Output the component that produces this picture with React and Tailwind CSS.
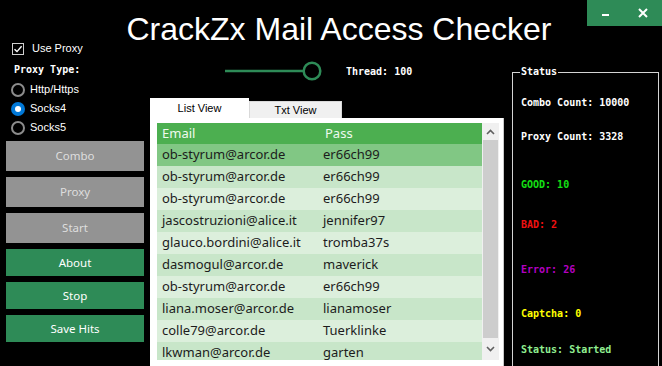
const ROWS = [
  ['ob-styrum@arcor.de', 'er66ch99'],
  ['ob-styrum@arcor.de', 'er66ch99'],
  ['ob-styrum@arcor.de', 'er66ch99'],
  ['jascostruzioni@alice.it', 'jennifer97'],
  ['glauco.bordini@alice.it', 'tromba37s'],
  ['dasmogul@arcor.de', 'maverick'],
  ['ob-styrum@arcor.de', 'er66ch99'],
  ['liana.moser@arcor.de', 'lianamoser'],
  ['colle79@arcor.de', 'Tuerklinke'],
  ['lkwman@arcor.de', 'garten'],
];

const mono = { fontFamily: '"DejaVu Sans Mono", "Liberation Mono", monospace' };

function Radio({ checked, label }) {
  return (
    <div className="flex h-[19px] items-center">
      {checked ? (
        <span className="ml-[11px] flex h-[14px] w-[14px] items-center justify-center rounded-full bg-[#0078d7]">
          <span className="h-[6px] w-[6px] rounded-full bg-white" />
        </span>
      ) : (
        <span className="ml-[11px] h-[14px] w-[14px] rounded-full border-2 border-[#8c8c8c]" />
      )}
      <span className="ml-[5px] text-[11px] text-white">{label}</span>
    </div>
  );
}

function SideButton({ label, green, h }) {
  return (
    <div
      className={`flex w-[138px] items-center justify-center text-[11.5px] ${h} ${
        green ? 'bg-[#2e8b57] text-white' : 'bg-[#939393] text-[#dedede]'
      }`}
      style={{ fontFamily: '"Noto Sans", sans-serif' }}
    >
      {label}
    </div>
  );
}

export default function App() {
  return (
    <div
      className="relative flex h-[366px] w-[662px] flex-col overflow-hidden bg-black"
      style={{ fontFamily: '"Liberation Sans", Arial, sans-serif' }}
    >
      {/* title bar */}
      <div className="relative h-[42px] shrink-0">
        <div className="pl-[16px] pt-[13px] text-center text-[32px] leading-[32px] text-white">
          CrackZx Mail Access Checker
        </div>
        <div className="absolute right-0 top-0 flex h-[26px] w-[75px] bg-[#2e8b57]">
          <div className="flex w-[37px] items-center justify-center">
            <span className="mt-[3px] h-[2px] w-[7px] bg-white" />
          </div>
          <div className="flex w-[38px] items-center justify-center">
            <svg width="10" height="10" viewBox="0 0 10 10">
              <path d="M1 1L9 9M9 1L1 9" stroke="white" strokeWidth="2" />
            </svg>
          </div>
        </div>
      </div>

      <div className="flex flex-1">
        {/* left column */}
        <div className="flex w-[150px] shrink-0 flex-col">
          <div className="flex h-[13px] items-center">
            <span className="ml-[12px] flex h-[12px] w-[12px] items-center justify-center border border-[#cfcfcf]">
              <svg width="10" height="10" viewBox="0 0 10 10">
                <path d="M1.5 5.2L4 7.6L8.6 2.2" fill="none" stroke="white" strokeWidth="1.4" />
              </svg>
            </span>
            <span className="ml-[8px] text-[11px] text-white">Use Proxy</span>
          </div>
          <div className="ml-[14px] mt-[8px] text-[10px] font-bold leading-[14px] text-white" style={mono}>
            Proxy Type:
          </div>
          <div className="mt-[3px] flex flex-col">
            <Radio label="Http/Https" />
            <Radio checked label="Socks4" />
            <Radio label="Socks5" />
          </div>
          <div className="ml-[6px] mt-[4px] flex flex-col gap-[6px]">
            <SideButton label="Combo" h="h-[30px]" />
            <SideButton label="Proxy" h="h-[30px]" />
            <SideButton label="Start" h="h-[30px]" />
            <SideButton label="About" h="h-[27px]" green />
            <SideButton label="Stop" h="h-[27px]" green />
            <SideButton label="Save Hits" h="h-[27px]" green />
          </div>
        </div>

        {/* middle column */}
        <div className="flex w-[355px] shrink-0 flex-col">
          <div className="mt-[19px] flex h-[20px] items-center">
            <svg className="ml-[75px]" width="100" height="20" viewBox="0 0 100 20">
              <line x1="0" y1="10" x2="78" y2="10" stroke="#2e8b57" strokeWidth="2.5" />
              <circle cx="87" cy="10" r="8.3" fill="black" stroke="#2e8b57" strokeWidth="2.5" />
            </svg>
            <span className="ml-[21px] text-[10px] font-bold text-white" style={mono}>
              Thread: 100
            </span>
          </div>
          <div className="mt-[17px] flex h-[20px]">
            <div className="flex w-[99px] items-center justify-center bg-white text-[11px] text-black">
              List View
            </div>
            <div className="mt-[3px] flex w-[93px] items-center justify-center border border-b-0 border-[#d9d9d9] bg-[#f0f0f0] text-[11px] text-black">
              Txt View
            </div>
          </div>
          <div className="flex w-[354px] flex-1 border-b border-r border-[#c8c8c8] bg-white pb-[5px] pl-[7px] pr-[4px] pt-[5px]">
            <div
              className="flex h-[237px] flex-1 overflow-hidden"
              style={{ fontFamily: '"Noto Sans", sans-serif' }}
            >
              <div className="flex flex-1 flex-col overflow-hidden">
                <div className="flex h-[21px] shrink-0 items-center bg-[#4caf50] text-[13px] text-[#effaef]">
                  <span className="w-[168px] pl-[5px]">Email</span>
                  <span>Pass</span>
                </div>
                {ROWS.map(([email, pass], i) => (
                  <div
                    key={i}
                    className={`flex h-[22px] shrink-0 items-center text-[13px] text-[#1c1c1c] ${
                      i === 0 ? 'bg-[#81c784]' : i % 2 === 1 ? 'bg-[#c8e6c9]' : 'bg-[#dcefdc]'
                    }`}
                  >
                    <span className="w-[166px] pl-[5px]">{email}</span>
                    <span>{pass}</span>
                  </div>
                ))}
              </div>
              <div className="flex w-[17px] shrink-0 flex-col bg-[#f0f0f0]">
                <div className="flex h-[17px] items-center justify-center">
                  <svg width="9" height="6" viewBox="0 0 9 6">
                    <path d="M1 5L4.5 1.5L8 5" fill="none" stroke="#606060" strokeWidth="1.6" />
                  </svg>
                </div>
                <div className="mx-[1px] h-[198px] bg-[#cdcdcd]" />
                <div className="flex flex-1 items-center justify-center">
                  <svg width="9" height="6" viewBox="0 0 9 6">
                    <path d="M1 1L4.5 4.5L8 1" fill="none" stroke="#606060" strokeWidth="1.6" />
                  </svg>
                </div>
              </div>
            </div>
          </div>
        </div>

        {/* status column */}
        <div className="ml-[7px] mt-[30px] w-[147px] shrink-0">
          <div className="relative h-[300px] border border-[#d4d4d4] pl-[8px]" style={mono}>
            <span className="absolute -top-[7px] left-[7px] bg-black px-[1px] text-[10px] font-bold leading-[12px] text-white">
              Status
            </span>
            <div className="flex flex-col text-[10px] font-bold leading-[12px]">
              <span className="mt-[24px] text-white">Combo Count: 10000</span>
              <span className="mt-[22px] text-white">Proxy Count: 3328</span>
              <span className="mt-[36px] text-[#14e014]">GOOD: 10</span>
              <span className="mt-[28px] text-[#f01010]">BAD: 2</span>
              <span className="mt-[33px] text-[#b400c0]">Error: 26</span>
              <span className="mt-[32px] text-[#ffff00]">Captcha: 0</span>
              <span className="mt-[24px] text-[#90ee90]">Status: Started</span>
            </div>
          </div>
        </div>
      </div>
    </div>
  );
}
